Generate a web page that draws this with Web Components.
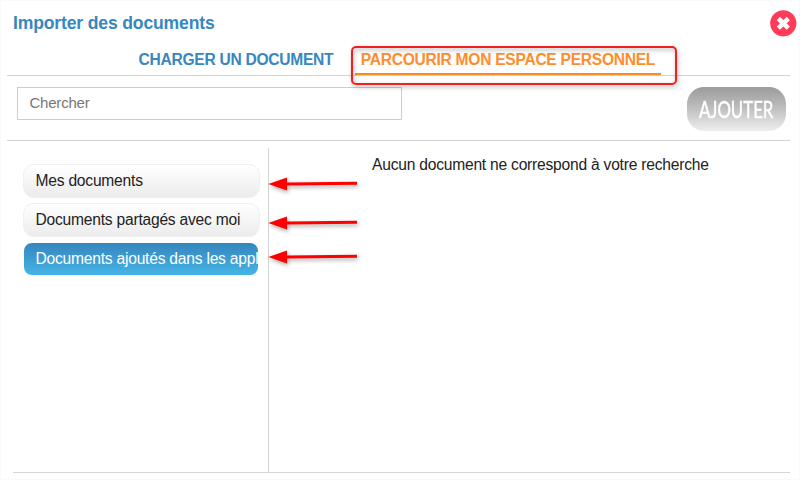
<!DOCTYPE html>
<html lang="fr">
<head>
<meta charset="utf-8">
<title>Importer des documents</title>
<style>
html,body{margin:0;width:800px;height:480px;overflow:hidden;background:#fff}
body{font-family:"Liberation Sans",Arial,sans-serif;font-size:15.6px;letter-spacing:-.22px;color:#222}
</style>
</head>
<body>
<import-dialog></import-dialog>
<script>
const define = (name, html) => customElements.define(name, class extends HTMLElement {
  constructor() {
    super();
    this.attachShadow({mode: 'open'}).innerHTML = html;
  }
});

define('close-button', `
<style>:host{display:block;width:27px;height:27px}svg{display:block}</style>
<svg width="27" height="27" viewBox="0 0 27 27"><circle cx="13.3" cy="13.3" r="13.1" fill="#ff3b59"/>
<path d="M8.3 8.5L18.3 18.1M18.3 8.5L8.3 18.1" stroke="#fff" stroke-width="4.6"/></svg>`);

define('dialog-tab', `
<style>
:host{display:block;box-sizing:border-box;height:29px;padding:0 6.5px;line-height:28px;font-size:15.6px;letter-spacing:-.28px;font-weight:bold;color:#3787c0;white-space:nowrap}
:host([active]){color:#ff8d2e}
.bar{display:none;height:2.4px;margin:-1px -6px 0;background:#ff8a20}
:host([active]) .bar{display:block}
</style><slot></slot><div class="bar"></div>`);

define('search-field', `
<style>:host{display:block;box-sizing:border-box;width:385px;height:33px;border:1px solid #ccc;padding-left:11.5px;line-height:30px;font-size:15px;letter-spacing:-.22px;color:#777}</style><slot></slot>`);

define('add-button', `
<style>
:host{display:flex;align-items:center;justify-content:center;width:99px;height:44px;border-radius:17px;background:linear-gradient(#9c9c9c,#b8b8b8 40%,#eee);color:#fff;font:400 24px/42px Lato,sans-serif;letter-spacing:0}
span{display:block;transform:scaleX(.7);white-space:nowrap;-webkit-text-stroke:.5px #fff}
</style><span><slot></slot></span>`);

define('folder-item', `
<style>
:host{display:block;box-sizing:border-box;width:237px;height:34px;border:1px solid #f0f0f0;border-radius:11px;background:linear-gradient(#fff,#ececec);padding-left:11.5px;line-height:32px;white-space:nowrap;overflow:hidden}
:host([active]){width:234px;height:32px;margin:1px 0 0 1px;border:0;border-radius:8px;background:linear-gradient(#3585be,#45b5e6);color:#fff;padding-left:11.5px;line-height:31px}
</style><slot></slot>`);

define('pointer-arrow', `
<style>:host{display:block;position:absolute;width:100px;height:24px}svg{display:block;overflow:visible;filter:drop-shadow(1px 2px 2px rgba(0,0,0,.35))}</style>
<svg width="100" height="24"><path d="M18 12L88 11.3" stroke="#f00" stroke-width="3"/><path d="M-.7 12L18 5.4V18.6Z" fill="#f00"/></svg>`);

define('focus-frame', `
<style>:host{display:block;position:absolute;box-sizing:border-box;width:326px;height:39px;border:2px solid #f02020;border-radius:5px;filter:drop-shadow(1px 2px 2px rgba(0,0,0,.35))}</style>`);

define('import-dialog', `
<style>
:host{display:flex;flex-direction:column;position:relative;box-sizing:border-box;width:800px;height:480px;border:1px solid #fafafa;padding:0 8px 6px 6px;background:#fff}
header{display:flex;justify-content:space-between;height:45px;padding:9px 0 0 6px;box-sizing:border-box;margin-right:-6px}
h1{margin:0;font-size:17.6px;letter-spacing:-.17px;line-height:26px;font-weight:bold;color:#3787c0}
nav{display:flex;gap:14.5px;height:29px;padding-left:125px;position:relative;z-index:1}
nav dialog-tab{flex:none}
.tools{display:flex;justify-content:space-between;box-sizing:border-box;height:66px;border:solid #d5d5d5;border-width:1px 0;margin-right:1px;padding:11px 4px 0 10px}
main{display:flex;flex:1;margin:7px 1px 0 6px;border-bottom:1px solid #d5d5d5}
aside{display:flex;flex-direction:column;gap:5px;box-sizing:border-box;width:256px;padding:16px 0 0 10px;border-right:1px solid #d5d5d5}
p{margin:8px 0 0 103px;line-height:18px;white-space:nowrap}
focus-frame{z-index:2}
</style>
<header><h1>Importer des documents</h1><close-button></close-button></header>
<nav><dialog-tab>CHARGER UN DOCUMENT</dialog-tab><dialog-tab active>PARCOURIR MON ESPACE PERSONNEL</dialog-tab></nav>
<div class="tools"><search-field>Chercher</search-field><add-button>AJOUTER</add-button></div>
<main>
<aside><folder-item>Mes documents</folder-item><folder-item>Documents partagés avec moi</folder-item><folder-item active>Documents ajoutés dans les appl</folder-item></aside>
<p>Aucun document ne correspond à votre recherche</p>
</main>
<focus-frame style="left:350px;top:45px"></focus-frame>
<pointer-arrow style="left:268px;top:171px"></pointer-arrow>
<pointer-arrow style="left:268px;top:210px"></pointer-arrow>
<pointer-arrow style="left:268px;top:244px"></pointer-arrow>`);
</script>
</body>
</html>
